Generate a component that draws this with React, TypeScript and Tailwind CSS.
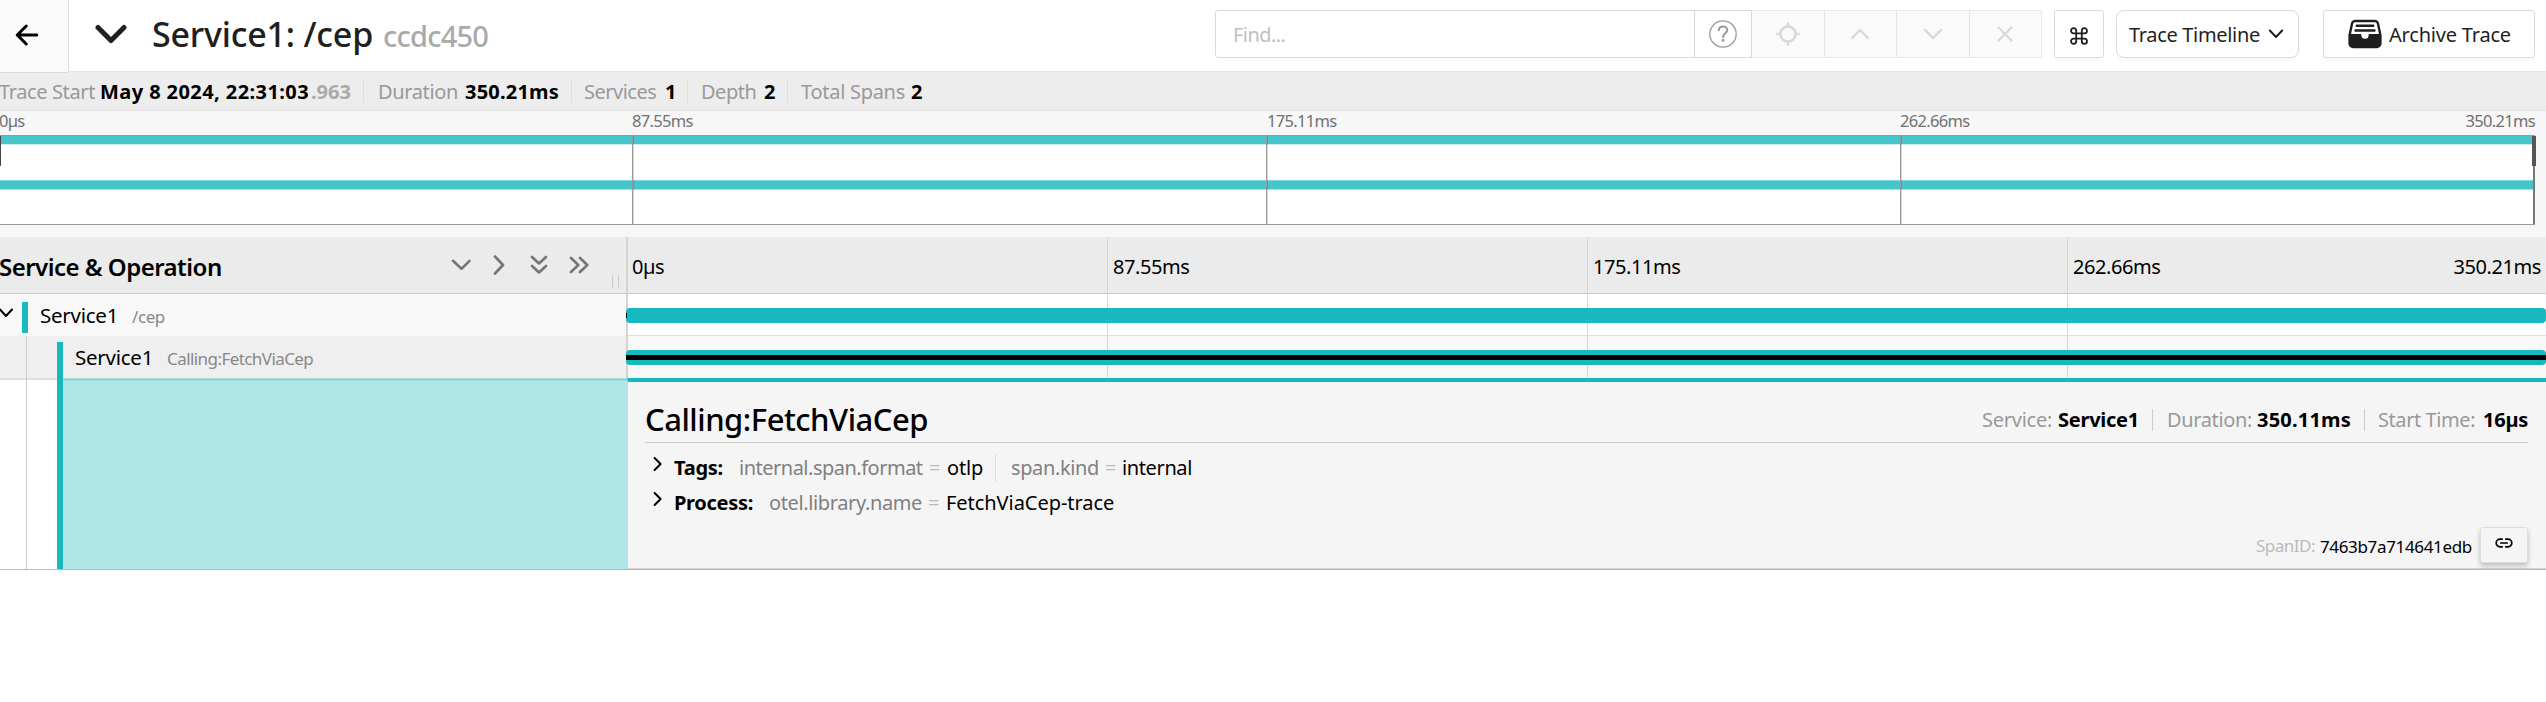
import type { ReactNode } from 'react';
import { IoArrowBack, IoFileTrayFull } from 'react-icons/io5';

type StrokeProps = { w: number; h: number; d: string; sw?: number; className?: string; children?: ReactNode };

function Stroke({ w, h, d, sw = 2, className = '', children }: StrokeProps) {
  return (
    <svg
      width={w}
      height={h}
      viewBox={`0 0 ${w} ${h}`}
      fill="none"
      stroke="currentColor"
      strokeWidth={sw}
      strokeLinecap="round"
      strokeLinejoin="round"
      className={`shrink-0 ${className}`}
    >
      <path d={d} />
      {children}
    </svg>
  );
}

function Header() {
  return (
    <header className="flex h-[72px] items-start bg-white">
      <a className="flex h-[72.5px] w-[69px] shrink-0 items-center border-r border-b border-[#ddd] bg-[#fafafa] pl-[11px] text-black">
        <IoArrowBack className="-mt-0.5 size-8" />
      </a>
      <div className="flex h-[72px] grow items-start border-b border-[#e4e4e4]">
        <div className="mt-[12px] flex h-11 items-center text-[#202020]">
          <Stroke w={34} h={20} sw={5} d="M4 3.5 17 16.5 30 3.5" className="ml-[25px]" />
          <h1 className="ml-[24px] flex items-baseline whitespace-nowrap">
            <span className="w-[231px] text-[34px] font-medium tracking-[-0.2px]">Service1: /cep</span>
            <span className="text-[29px] font-medium tracking-[-0.75px] text-[#aaa]">ccdc450</span>
          </h1>
        </div>
        <div className="mt-[10px] mr-[11px] ml-auto flex h-12 text-[20px] text-[#1f1f1f]">
          <div className="flex w-[480px] items-center rounded-l-[3px] border border-[#d9d9d9] pt-0.5 pl-[17px] tracking-[-0.55px] text-[#bfbfbf]">
            Find...
          </div>
          <div className="flex w-[57px] items-center justify-center border-y border-r border-[#d9d9d9] text-[#999]">
            <Stroke w={28} h={28} sw={1.3} d="">
              <circle cx="14" cy="14" r="13.2" />
              <path strokeWidth="2" d="M9.8 10.3C9.8 7.8 11.6 6.4 14 6.4s4.3 1.5 4.3 3.7c0 3.1-4.2 3.2-4.2 6.8" />
              <circle cx="14.1" cy="20.4" r="0.8" fill="currentColor" />
            </Stroke>
          </div>
          <div className="flex w-[290px] divide-x divide-[#e4e4e4] rounded-r-[3px] border-y border-r border-[#e8e8e8] bg-[#fafafa] text-[#d9d9d9]">
            <div className="flex flex-1 items-center justify-center">
              <Stroke w={24} h={24} sw={2.6} d="M12 1.5v3M12 19.5v3M1.5 12h3M19.5 12h3">
                <circle cx="12" cy="12" r="7.6" />
              </Stroke>
            </div>
            <div className="flex flex-1 items-center justify-center">
              <Stroke w={20} h={12} sw={2.4} d="M2 10 10 2 18 10" />
            </div>
            <div className="flex flex-1 items-center justify-center">
              <Stroke w={20} h={12} sw={2.4} d="M2 2 10 10 18 2" />
            </div>
            <div className="flex flex-1 items-center justify-center">
              <Stroke w={16} h={16} sw={2.4} d="M1.5 1.5 14.5 14.5M14.5 1.5 1.5 14.5" />
            </div>
          </div>
          <button className="ml-[12px] flex w-[50px] items-center justify-center rounded-[3px] border border-[#d9d9d9] pt-1 shadow-[0_3px_0_rgba(0,0,0,0.02)]">
            <Stroke
              w={18}
              h={18}
              sw={1.8}
              d="M6.2 3.8v10.4a2.6 2.6 0 1 1-2.6-2.6h10.8a2.6 2.6 0 1 1-2.6 2.6V3.8a2.6 2.6 0 1 1 2.6 2.6H3.6a2.6 2.6 0 1 1 2.6-2.6Z"
            />
          </button>
          <button className="ml-[12px] flex w-[183px] items-center rounded-[8px] border border-[#d9d9d9] pl-[12px] shadow-[0_3px_0_rgba(0,0,0,0.02)]">
            <span className="w-[139px] pt-0.5 text-left tracking-[-0.33px] whitespace-nowrap">Trace Timeline</span>
            <Stroke w={16} h={10} sw={2} d="M1.8 1.5 8 8 14.2 1.5" className="-mt-px" />
          </button>
          <button className="ml-[24px] flex w-[212px] items-center rounded-[3px] border border-[#d9d9d9] pl-[22px] shadow-[0_3px_0_rgba(0,0,0,0.02)]">
            <IoFileTrayFull className="size-[38px] shrink-0" />
            <span className="ml-[5px] pt-0.5 tracking-[-0.2px] whitespace-nowrap">Archive Trace</span>
          </button>
        </div>
      </div>
    </header>
  );
}

function Summary() {
  return (
    <div className="flex h-[39px] items-center border-b border-[#e4e4e4] bg-[#ededed] pt-px text-[20px] whitespace-nowrap text-[#999]">
      <span className="-ml-[1px] w-[101px] tracking-[-0.38px]">Trace Start</span>
      <b className="w-[211px] tracking-[0.42px] text-black">May 8 2024, 22:31:03</b>
      <b className="w-[52px] text-[#aaa]">.963</b>
      <i className="mr-[14px] h-[23px] w-px bg-[#ddd]" />
      <span className="w-[87px] tracking-[-0.36px]">Duration</span>
      <b className="w-[106px] tracking-[0.2px] text-black">350.21ms</b>
      <i className="mr-[12px] h-[23px] w-px bg-[#ddd]" />
      <span className="w-[81px] tracking-[-0.5px]">Services</span>
      <b className="w-[22px] text-black">1</b>
      <i className="mr-[13px] h-[23px] w-px bg-[#ddd]" />
      <span className="w-[63px] tracking-[-0.5px]">Depth</span>
      <b className="w-[23px] text-black">2</b>
      <i className="mr-[13px] h-[23px] w-px bg-[#ddd]" />
      <span className="w-[110px] tracking-[-0.28px]">Total Spans</span>
      <b className="text-black">2</b>
    </div>
  );
}

function Minimap() {
  return (
    <div className="h-[126px] bg-[#f7f7f7]">
      <div className="flex h-[24px] pr-[11px] text-[16.5px] leading-[20px] tracking-[-0.68px] text-[#717171]">
        <span className="-ml-px w-[633px]">0µs</span>
        <span className="w-[635px]">87.55ms</span>
        <span className="w-[633px]">175.11ms</span>
        <span>262.66ms</span>
        <span className="ml-auto">350.21ms</span>
      </div>
      <div className="relative h-[90px] w-[2535px] border-y border-[#999] bg-white">
        <div className="h-2 bg-[#46c6cb]" />
        <div className="h-px bg-[#c8eef0]" />
        <div className="mt-[35px] h-px bg-[#7bd7db]" />
        <div className="h-2 bg-[#46c6cb]" />
        <div className="h-px bg-[#a4e3e5]" />
        <div className="absolute inset-0 grid grid-cols-[633px_634px_634px_634px]">
          <i className="border-r border-[#999] shadow-[1px_0_rgba(0,0,0,0.16)]" />
          <i className="border-r border-[#999] shadow-[1px_0_rgba(0,0,0,0.16)]" />
          <i className="border-r border-[#999] shadow-[1px_0_rgba(0,0,0,0.16)]" />
          <i className="border-r-2 border-[#777]" />
        </div>
        <i className="absolute top-0 left-0 h-[30px] w-px bg-[#444]" />
        <i className="absolute top-0 -right-px h-[30px] w-1 bg-[#555]" />
      </div>
    </div>
  );
}

function Ticks({ children }: { children?: ReactNode }) {
  return (
    <div className="relative grid grow grid-cols-[479px_480px_480px_479px]">
      <i />
      <i className="border-l border-[#d6d6d6]" />
      <i className="border-l border-[#d6d6d6]" />
      <i className="border-l border-[#d6d6d6]" />
      {children}
    </div>
  );
}

function TimelineHeader() {
  return (
    <div className="flex h-[57px] border-b border-[#ccc] bg-[#ebebeb]">
      <div className="flex w-[628px] shrink-0 items-center border-r-2 border-[#d4d4d4] text-[#757575]">
        <h3 className="-ml-px w-[452px] pt-[3px] text-[24px] font-semibold tracking-[-0.52px] text-black">
          Service &amp; Operation
        </h3>
        <Stroke w={20} h={12} sw={2.6} d="M2 1.8 10.5 9.8 18.5 1.8" />
        <Stroke w={12} h={20} sw={2.6} d="M2 1.5 10 10 2 18.5" className="ml-[22px]" />
        <Stroke w={18} h={20} sw={2.6} d="M2 2 9 8.5 16 2M2 11 9 17.5 16 11" className="ml-[25px]" />
        <Stroke w={20} h={18} sw={2.6} d="M2 2 9.3 9 2 16M11 2 18.3 9 11 16" className="ml-[21px]" />
        <div className="mt-[38px] mr-[7px] ml-auto h-[13px] w-[7px] self-start border-x border-[#ccc]" />
      </div>
      <div className="grid grow grid-cols-[479px_480px_480px_479px] text-[20px] tracking-[-0.42px] text-black">
        <span className="flex items-center pt-[3px] pl-1">0µs</span>
        <span className="flex items-center border-l border-[#d6d6d6] pt-[3px] pl-[5px]">87.55ms</span>
        <span className="flex items-center border-l border-[#d6d6d6] pt-[3px] pl-[5px]">175.11ms</span>
        <span className="flex items-center justify-between border-l border-[#d6d6d6] pt-[3px] pr-[5px] pl-[5px]">
          <span>262.66ms</span>
          <span>350.21ms</span>
        </span>
      </div>
    </div>
  );
}

function Rows() {
  return (
    <>
      <div className="flex h-[42px]">
        <div className="flex w-[628px] shrink-0 items-center border-r-2 border-[#d4d4d4] bg-[#f8f8f8] whitespace-nowrap">
          <Stroke w={14} h={10} sw={2} d="M0 1.5 6 8 12 1.5" className="-mt-[5px]" />
          <i className="mt-1 mr-[12px] ml-[8px] h-[31px] w-[6px] bg-[#17b8be]" />
          <span className="flex items-baseline pt-px">
            <span className="w-[92px] text-[20.5px] tracking-[-0.25px] text-black">Service1</span>
            <span className="text-[17px] tracking-[-0.4px] text-[#888]">/cep</span>
          </span>
        </div>
        <Ticks>
          <i className="absolute inset-x-0 bottom-0 h-px bg-[#ddd]" />
          <i className="absolute top-[14px] right-0 -left-[2px] h-[15px] overflow-hidden rounded-[4px] bg-[#17b8be]">
            <i className="absolute top-[5px] left-0 h-[5px] w-px bg-black" />
          </i>
        </Ticks>
      </div>
      <div className="flex h-[42px]">
        <div className="flex w-[628px] shrink-0 items-center border-r-2 border-[#d4d4d4] bg-[#efefef] whitespace-nowrap">
          <i className="ml-[26px] h-full w-px bg-[#ccc]" />
          <i className="mt-[6px] mr-[12px] ml-[30px] h-[36px] w-[6px] bg-[#17b8be]" />
          <span className="flex items-baseline pt-px">
            <span className="w-[92px] text-[20.5px] tracking-[-0.25px] text-black">Service1</span>
            <span className="text-[17px] tracking-[-0.57px] text-[#888]">Calling:FetchViaCep</span>
          </span>
        </div>
        <div className="flex grow bg-[#f8f8f8]">
          <Ticks>
            <i className="absolute top-[14px] right-0 -left-[2px] h-[15px] rounded-[4px] bg-[#17b8be]" />
            <i className="absolute top-[19px] right-0 -left-[2px] h-[5px] bg-black" />
          </Ticks>
        </div>
      </div>
    </>
  );
}

function Detail() {
  return (
    <div className="flex h-[192px] border-b border-[#bbb]">
      <div className="flex w-[627px] shrink-0">
        <i className="h-full w-[26px] border-t-2 border-[#ddd]" />
        <i className="h-full w-px bg-[#ccc]" />
        <i className="h-full w-[30px] border-t-2 border-[#ddd]" />
        <i className="h-full w-[6px] bg-[#17b8be]" />
        <div className="grow bg-[#afe6e8]">
          <div className="h-px bg-[#a3dcde]" />
          <div className="h-px bg-[#98cdd0]" />
          <div className="h-px bg-[#a5dadc]" />
        </div>
      </div>
      <div className="flex grow flex-col border-t-4 border-b border-l border-t-[#17b8be] border-b-[#d3d3d3] border-l-[#d3d3d3] bg-[#f5f5f5] pr-[18px] pl-[17px] text-[20px] whitespace-nowrap text-black">
        <div className="flex h-[61px] items-center border-b border-[#ccc] pt-[15px]">
          <h2 className="text-[31px] font-medium tracking-[-0.48px]">Calling:FetchViaCep</h2>
          <div className="ml-auto flex items-center text-[#999]">
            <span className="w-[76px] tracking-[-0.25px]">Service:</span>
            <b className="w-[94px] tracking-[-0.25px] text-black">Service1</b>
            <i className="mr-[14px] h-[22px] w-px bg-[#ccc]" />
            <span className="w-[90px] tracking-[-0.36px]">Duration:</span>
            <b className="w-[107px] tracking-[0.2px] text-black">350.11ms</b>
            <i className="mr-[13px] h-[22px] w-px bg-[#ccc]" />
            <span className="w-[105px] tracking-[-0.42px]">Start Time:</span>
            <b className="w-[45px] tracking-[-0.25px] text-black">16µs</b>
          </div>
        </div>
        <div className="mt-[6px] flex h-[35px] items-center pt-[3px] pl-2">
          <Stroke w={10} h={16} sw={2} d="M1.6 2 7.6 8 1.6 14" className="-mt-[8px]" />
          <b className="ml-[11px] w-[65px] tracking-[-0.25px]">Tags:</b>
          <span className="w-[190px] tracking-[-0.5px] text-[#808080]">internal.span.format</span>
          <span className="w-[18px] text-[#bbb]">=</span>
          <span className="w-[48px] tracking-[-0.2px]">otlp</span>
          <i className="mr-[15px] h-[28px] w-px bg-[#ddd]" />
          <span className="w-[94px] tracking-[-0.38px] text-[#808080]">span.kind</span>
          <span className="w-[17px] text-[#bbb]">=</span>
          <span className="tracking-[-0.38px]">internal</span>
        </div>
        <div className="flex h-[35px] items-center pt-[3px] pl-2">
          <Stroke w={10} h={16} sw={2} d="M1.6 2 7.6 8 1.6 14" className="-mt-[8px]" />
          <b className="ml-[11px] w-[95px] tracking-[-0.3px]">Process:</b>
          <span className="w-[159px] tracking-[-0.38px] text-[#808080]">otel.library.name</span>
          <span className="w-[18px] text-[#bbb]">=</span>
          <span className="tracking-[-0.05px]">FetchViaCep-trace</span>
        </div>
        <div className="mt-auto mb-[5px] flex h-[36px] items-center justify-end text-[17px]">
          <span className="w-[64px] pt-px tracking-[-0.5px] text-[#bbb]">SpanID:</span>
          <span className="w-[160px] pt-1 tracking-[-0.35px]">7463b7a714641edb</span>
          <button className="flex h-[36px] w-[48px] items-start justify-center rounded-[3px] border border-[#ddd] bg-[#f5f5f5] pt-[10px] shadow-[0_3px_5px_rgba(0,0,0,0.22)]">
            <Stroke w={18} h={10} sw={1.7} d="M7.2 1.2H5a3.8 3.8 0 0 0 0 7.6h2.2M10.8 1.2H13a3.8 3.8 0 0 1 0 7.6h-2.2M5.8 5h6.4" />
          </button>
        </div>
      </div>
    </div>
  );
}

export default function App() {
  return (
    <div className="h-[702px] w-[2546px] overflow-hidden bg-white font-['Noto_Sans','Open_Sans',sans-serif]">
      <Header />
      <Summary />
      <Minimap />
      <TimelineHeader />
      <Rows />
      <Detail />
    </div>
  );
}
